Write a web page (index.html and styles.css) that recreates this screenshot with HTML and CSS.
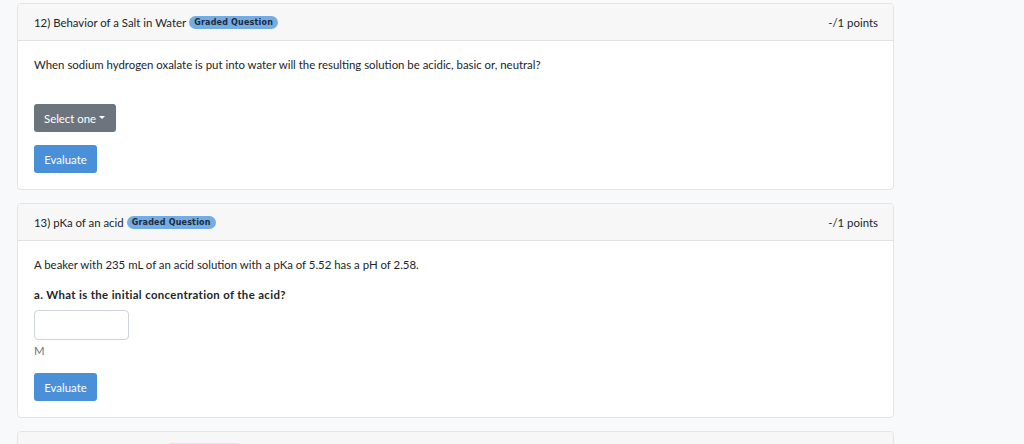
FILE: index.html
```html
<!DOCTYPE html>
<html>
<head>
<meta charset="utf-8">
<link rel="stylesheet" href="styles.css">
</head>
<body>
<div class="page">
  <div class="card">
    <div class="card-header">
      <div class="title">12) Behavior of a Salt in Water <span class="badge">Graded Question</span></div>
      <div class="points">-/1 points</div>
    </div>
    <div class="card-body">
      <p class="q">When sodium hydrogen oxalate is put into water will the resulting solution be acidic, basic or, neutral?</p>
      <button class="btn btn-gray">Select one <span class="caret"></span></button>
      <button class="btn btn-blue">Evaluate</button>
    </div>
  </div>
  <div class="card">
    <div class="card-header">
      <div class="title">13) pKa of an acid <span class="badge">Graded Question</span></div>
      <div class="points">-/1 points</div>
    </div>
    <div class="card-body">
      <p class="q2">A beaker with 235 mL of an acid solution with a pKa of 5.52 has a pH of 2.58.</p>
      <p class="sub">a. What is the initial concentration of the acid?</p>
      <input class="field" type="text">
      <div class="unit">M</div>
      <button class="btn btn-blue">Evaluate</button>
    </div>
  </div>
  <div class="card">
    <div class="card-header peek">
      <span class="badge-peek"></span>
    </div>
  </div>
</div>
</body>
</html>
```
FILE: styles.css
```css
html, body {
  margin: 0;
  padding: 0;
  background: #f8f9fa;
  font-family: "Lato", "Noto Sans", sans-serif;
  font-size: 11.4px;
  color: #212529;
}
.page {
  padding: 3px 0 0 17px;
  width: 877px;
  display: flex;
  flex-direction: column;
  gap: 13px;
}
.card {
  background: #fff;
  border: 1px solid #e2e4e7;
  border-radius: 4px;
  overflow: hidden;
}
.card-header {
  height: 36px;
  background: #f7f7f7;
  border-bottom: 1px solid #e1e1e1;
  display: flex;
  align-items: center;
  justify-content: space-between;
  padding: 0 15px 0 16px;
}
.title { display: flex; align-items: center; gap: 3px; }
.badge {
  display: inline-block;
  background: #74ade3;
  color: #1d2b3a;
  font-family: "DejaVu Sans", sans-serif;
  font-weight: bold;
  font-size: 8px;
  letter-spacing: 0.2px;
  height: 13px;
  line-height: 13px;
  padding: 0 5px;
  border-radius: 7px;
}
.card-body {
  padding: 16px;
  display: flex;
  flex-direction: column;
  align-items: flex-start;
}
.q { margin: 0 0 31px; line-height: 16px; }
.q2 { margin: 0 0 14px; line-height: 16px; }
.sub {
  margin: 0 0 7px;
  line-height: 16px;
  font-weight: bold;
  letter-spacing: 0.35px;
}
.btn {
  font-family: inherit;
  font-size: 11.4px;
  color: #fff;
  border: none;
  border-radius: 3px;
  height: 28px;
  padding: 0 10px;
  margin: 0;
  cursor: pointer;
}
.btn-gray { background: #6c757d; width: 82px; margin-bottom: 13px; display: flex; align-items: center; gap: 3px; }
.btn-blue { background: #4a90d9; width: 63px; }
.caret {
  display: inline-block;
  width: 0; height: 0;
  border-left: 3px solid transparent;
  border-right: 3px solid transparent;
  border-top: 3px solid #fff;
  margin-top: -2px;
}
.field {
  width: 95px;
  height: 30px;
  box-sizing: border-box;
  border: 1px solid #ced4da;
  border-radius: 4px;
  margin: 0;
}
.unit { line-height: 16px; margin: 3px 0 14px; color: #6c757d; }
.peek { height: 30px; align-items: flex-start; padding-top: 11px; }
.badge-peek {
  display: block;
  margin-left: 131px;
  width: 79px;
  height: 8px;
  background: #d6e8f7;
  border-radius: 7px 7px 0 0;
}
```
